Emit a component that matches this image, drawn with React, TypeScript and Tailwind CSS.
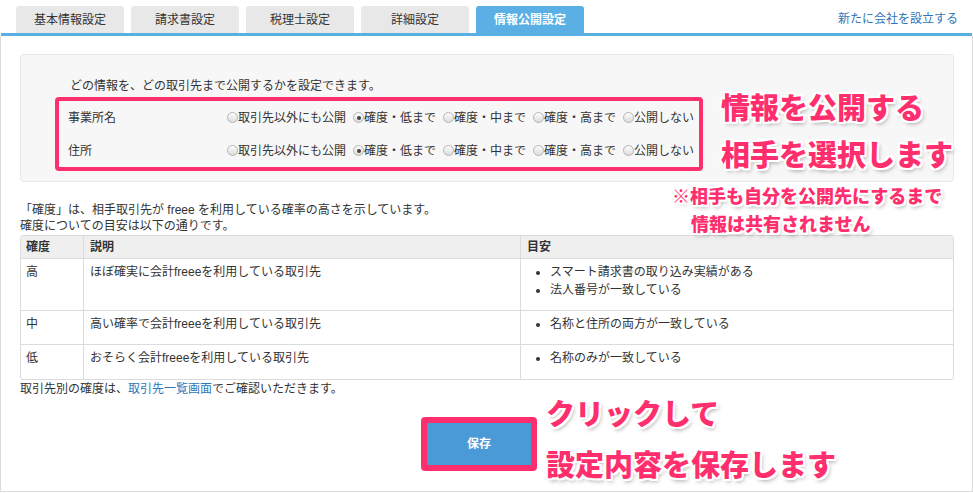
import React from "react";

const tabs = ["基本情報設定", "請求書設定", "税理士設定", "詳細設定", "情報公開設定"];
const options = ["取引先以外にも公開", "確度・低まで", "確度・中まで", "確度・高まで", "公開しない"];

const callout =
  "absolute font-black text-[#ff2f6e] whitespace-nowrap [text-shadow:2px_0_0_#fff,-2px_0_0_#fff,0_2px_0_#fff,0_-2px_0_#fff,2px_2px_0_#fff,-2px_-2px_0_#fff,2px_-2px_0_#fff,-2px_2px_0_#fff,2px_3px_4px_rgba(0,0,0,0.35)]";

function Radio({ checked, label }: { checked: boolean; label: string }) {
  return (
    <span className="flex items-center">
      <span className="w-[11px] h-[11px] rounded-full border border-[#b4b4b4] bg-gradient-to-b from-[#fdfdfd] to-[#dcdcdc] flex items-center justify-center">
        {checked && <span className="w-[4px] h-[4px] rounded-full bg-[#444]" />}
      </span>
      <span>{label}</span>
    </span>
  );
}

function SettingRow({ name }: { name: string }) {
  return (
    <div className="h-[33px] flex items-center">
      <span className="w-[168px] pl-[9px]">{name}</span>
      <div className="flex gap-[7px]">
        {options.map((o, i) => (
          <Radio key={o} label={o} checked={i === 1} />
        ))}
      </div>
    </div>
  );
}

export default function App() {
  return (
    <div className="relative w-[973px] h-[493px] overflow-hidden bg-white text-[12px] text-[#333] font-['Liberation_Sans','Noto_Sans_CJK_JP',sans-serif]">
      <header className="h-[33px] flex items-end pl-[16px] pr-[15px]">
        <nav className="flex gap-[7px]">
          {tabs.map((t, i) => (
            <div
              key={t}
              className={`w-[108px] h-[27px] rounded-t-[3px] flex items-center justify-center ${
                i === 4 ? "bg-[#5ab0e4] text-white font-bold" : "bg-[#e8e8e8]"
              }`}
            >
              {t}
            </div>
          ))}
        </nav>
        <a className="ml-auto self-center mt-[4px] text-[#2f76b8]">新たに会社を設立する</a>
      </header>
      <div className="h-[3px] bg-[#5aafe2] mx-[1px]" />

      <main className="h-[456px] border-x border-b border-[#dcdcdc] pt-[18px] pl-[19px] pr-[18px]">
        <section className="h-[128px] rounded-[4px] border border-[#e8e8e8] bg-[#f7f7f7] pt-[23px] pl-[34px]">
          <p className="leading-[17px] pl-[15px] mb-[2px]">どの情報を、どの取引先まで公開するかを設定できます。</p>
          <div className="w-[648px] h-[74px] border-4 border-[#ff2f6e] rounded-[4px]">
            <SettingRow name="事業所名" />
            <SettingRow name="住所" />
          </div>
        </section>

        <div className="mt-[20px] leading-[16px]">
          <p>「確度」は、相手取引先が freee を利用している確率の高さを示しています。</p>
          <p>確度についての目安は以下の通りです。</p>
        </div>

        <table className="mt-[1px] w-full border-separate border-spacing-0 border border-[#dcdcdc] rounded-[3px]">
          <thead>
            <tr className="h-[23px] bg-[#efefef] font-bold text-left">
              <th className="w-[62px] px-[5px] border-b border-[#dcdcdc]">確度</th>
              <th className="w-[437px] px-[6px] border-b border-l border-[#dcdcdc]">説明</th>
              <th className="px-[6px] border-b border-l border-[#dcdcdc]">目安</th>
            </tr>
          </thead>
          <tbody className="align-top leading-[18px]">
            <tr className="h-[52px]">
              <td className="px-[5px] pt-[4px] border-b border-[#dcdcdc]">高</td>
              <td className="px-[6px] pt-[4px] border-b border-l border-[#dcdcdc]">ほぼ確実に会計freeeを利用している取引先</td>
              <td className="pl-[29px] pt-[4px] border-b border-l border-[#dcdcdc]">
                <ul className="list-disc">
                  <li>スマート請求書の取り込み実績がある</li>
                  <li>法人番号が一致している</li>
                </ul>
              </td>
            </tr>
            <tr className="h-[34px]">
              <td className="px-[5px] pt-[4px] border-b border-[#dcdcdc]">中</td>
              <td className="px-[6px] pt-[4px] border-b border-l border-[#dcdcdc]">高い確率で会計freeeを利用している取引先</td>
              <td className="pl-[29px] pt-[4px] border-b border-l border-[#dcdcdc]">
                <ul className="list-disc">
                  <li>名称と住所の両方が一致している</li>
                </ul>
              </td>
            </tr>
            <tr className="h-[34px]">
              <td className="px-[5px] pt-[4px]">低</td>
              <td className="px-[6px] pt-[4px] border-l border-[#dcdcdc]">おそらく会計freeeを利用している取引先</td>
              <td className="pl-[29px] pt-[4px] border-l border-[#dcdcdc]">
                <ul className="list-disc">
                  <li>名称のみが一致している</li>
                </ul>
              </td>
            </tr>
          </tbody>
        </table>

        <p className="mt-[1px] leading-[16px]">
          取引先別の確度は、<a className="text-[#2f76b8]">取引先一覧画面</a>でご確認いただきます。
        </p>

        <div className="mt-[20px] ml-[401px] w-[116px] h-[54px] border-[6px] border-[#ff2f6e] rounded-[4px]">
          <button className="w-full h-full bg-[#4a9ad8] text-white font-bold">保存</button>
        </div>
      </main>

      <div className={`${callout} left-[721px] top-[89px] text-[29px] leading-[40px]`}>情報を公開する</div>
      <div className={`${callout} left-[721px] top-[136px] text-[29px] leading-[40px]`}>相手を選択します</div>
      <div className={`${callout} left-[672px] top-[185px] text-[18px] leading-[24px]`}>※相手も自分を公開先にするまで</div>
      <div className={`${callout} left-[691px] top-[213px] text-[18px] leading-[24px]`}>情報は共有されません</div>
      <div className={`${callout} left-[546px] top-[395px] text-[29px] leading-[40px]`}>クリックして</div>
      <div className={`${callout} left-[546px] top-[446px] text-[29px] leading-[40px]`}>設定内容を保存します</div>
    </div>
  );
}
